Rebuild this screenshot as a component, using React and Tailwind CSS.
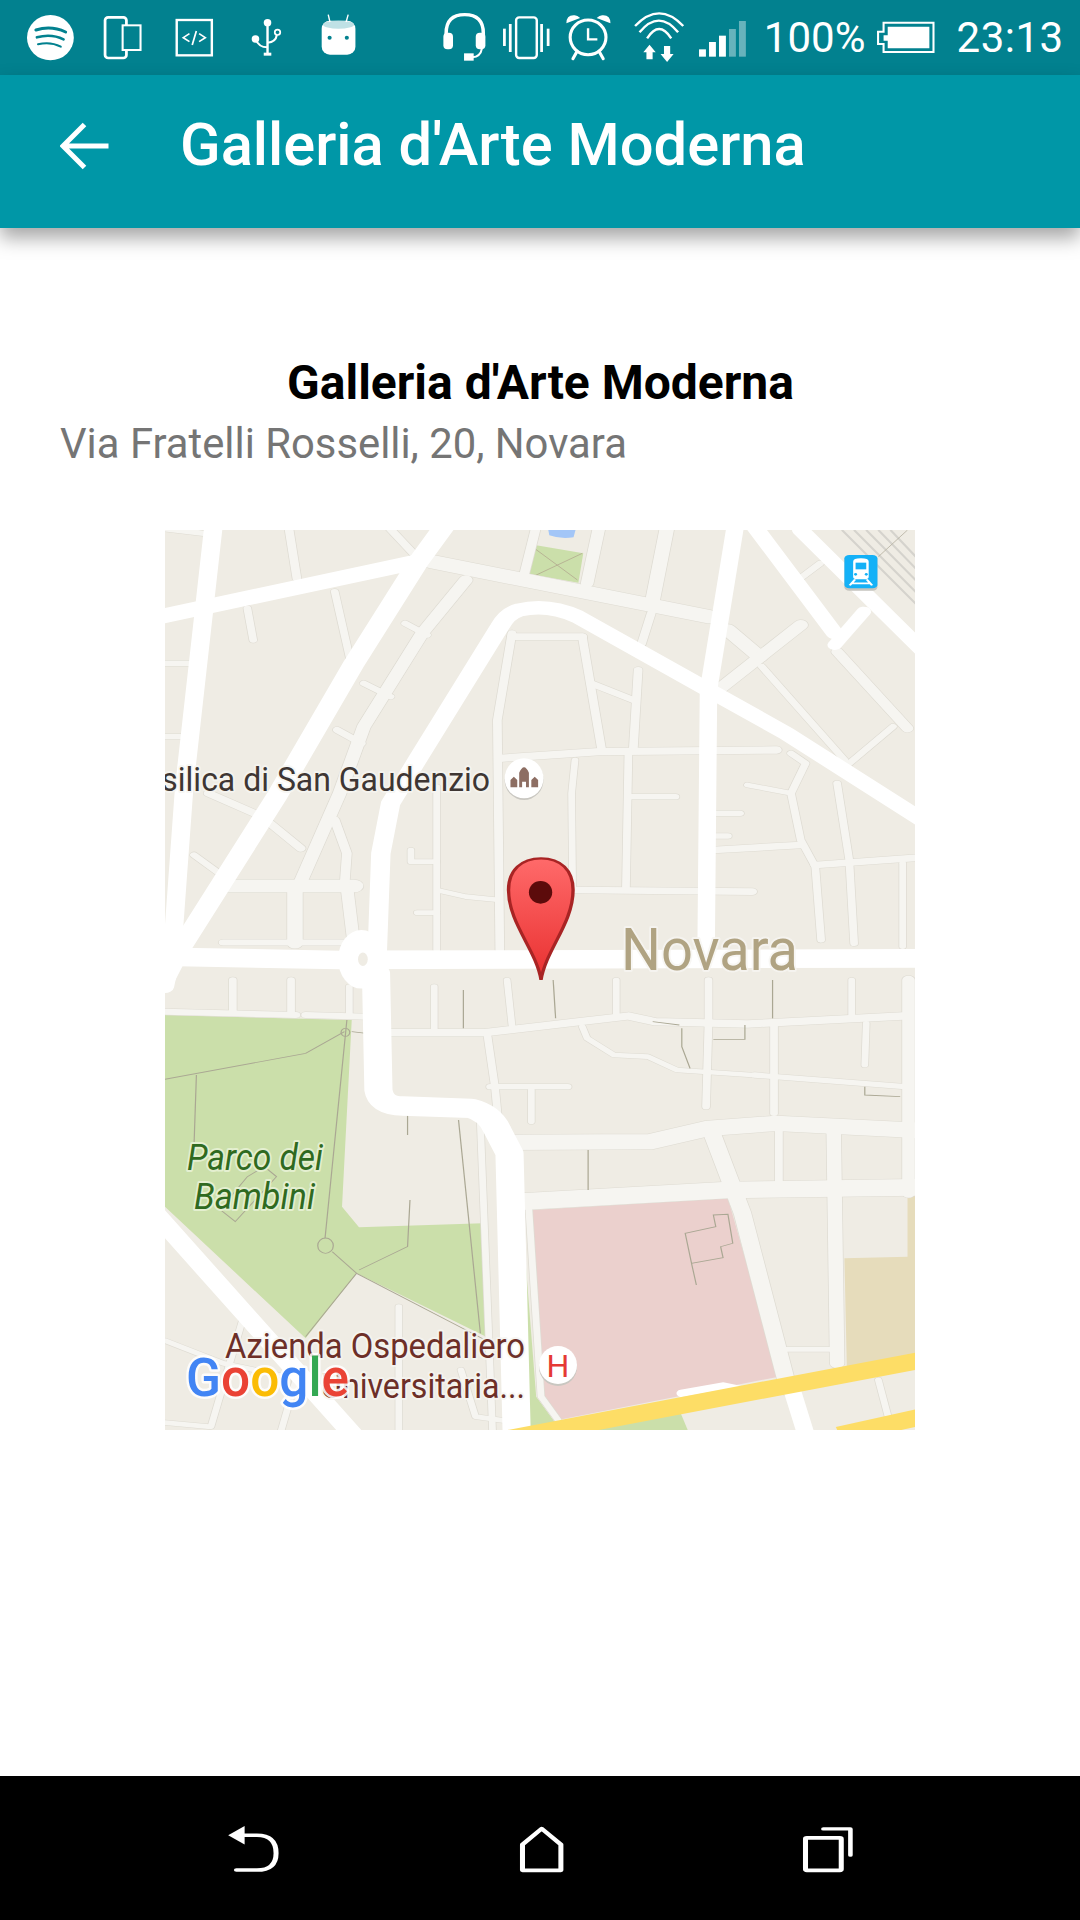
import React from 'react';

// road lists are in "zoom" coords of the map, the groups below scale them down
const topWhite = [
  ['M110 20 L90 280 L50 800 L25 1300 L10 1400', 38],
  ['M0 290 L530 125', 44],
  ['M585 20 L530 130 L400 430 L240 830 L40 1290 L5 1390', 44],
  ['M1570 900 L1290 640 L1130 510 L860 290 Q800 250 740 270 Q715 280 700 320 L530 720 L475 850 L455 1000 L445 1400', 40],
  ['M1185 20 L1130 510 L1125 1300', 36],
  ['M1225 20 L1390 340', 36],
  ['M1320 30 L1570 390', 36],
  ['M1450 275 L1390 375', 30],
  ['M0 1310 L370 1320 L1570 1315', 56],
];

const topLight = [
  ['M560 125 L1130 290', 40],
  ['M265 20 L282 175', 18],
  ['M470 20 L525 105', 18],
  ['M0 25 L90 40', 16],
  ['M775 20 L750 165', 20],
  ['M905 20 L880 190', 26],
  ['M1045 20 L1015 240', 30],
  ['M1012 280 L992 372', 18],
  ['M630 180 L540 340 L420 620 L370 820 L290 1085', 28],
  ['M180 265 L192 360', 16],
  ['M360 215 L395 440', 16],
  ['M420 490 L475 530', 16],
  ['M505 310 L550 345', 16],
  ['M365 630 L415 670', 18],
  ['M100 820 L210 890 L290 985', 20],
  ['M10 430 H70', 16],
  ['M10 650 H60', 16],
  ['M70 1005 L122 1060', 16],
  ['M725 350 H870', 20],
  ['M725 340 L695 600 L700 1290', 18],
  ['M870 350 L910 690', 18],
  ['M700 715 L905 695 L1270 690', 22],
  ['M888 490 L975 540', 18],
  ['M985 450 L975 690', 18],
  ['M965 700 L960 1100', 16],
  ['M855 720 L848 820 L850 1100', 14],
  ['M970 830 H1062', 16],
  ['M1140 880 H1195', 16],
  ['M1140 948 H1170', 16],
  ['M1210 795 L1300 820', 14],
  ['M855 1110 L1220 1115', 20],
  ['M1300 700 L1330 730 L1300 820 L1320 960 L1350 1040 L1362 1260', 16],
  ['M1140 990 L1320 975', 20],
  ['M1350 1035 L1570 1012', 20],
  ['M1395 790 L1420 1020 L1430 1270', 16],
  ['M1530 1030 V1280', 14],
  ['M570 800 V1290', 14],
  ['M575 1112 L630 1130 L700 1140', 14],
  ['M530 1178 H570', 14],
  ['M517 990 V1025 H570', 14],
  ['M130 1098 H400', 38],
  ['M278 1100 V1270', 32],
  ['M385 1100 L400 1280', 26],
  ['M130 1268 H380', 18],
  ['M360 900 L385 1000 L380 1100', 20],
  ['M1170 330 L1235 410', 34],
  ['M1320 315 L1150 510', 30],
  ['M1240 440 L1410 720', 16],
  ['M1395 395 L1540 625', 24],
  ['M1510 620 L1412 740', 16],
  ['M1360 130 L1305 190', 16],
];

const bottomLight = [
  ['M10 95 L280 105', 18],
  ['M300 105 L428 110', 18],
  ['M150 0 V100', 16],
  ['M270 0 V100', 16],
  ['M390 20 V100', 14],
  ['M465 158 H670 L965 108 L1020 125 L1210 132 L1530 108', 22],
  ['M565 20 V150', 14],
  ['M715 0 L725 135', 14],
  ['M940 0 V100', 14],
  ['M1130 0 V130 L1125 380', 16],
  ['M1425 0 V105', 14],
  ['M1265 135 V400', 16],
  ['M870 140 L880 175 L935 225 L1005 230 L1065 270 L1220 285', 14],
  ['M1225 285 L1535 320', 16],
  ['M1455 130 L1452 255', 14],
  ['M675 170 L690 320 L700 470', 16],
  ['M680 320 H840', 16],
  ['M765 330 V425', 14],
  ['M720 487 L1010 485 L1130 445 L1270 430 L1570 452', 46],
  ['M745 665 L1170 630 L1570 622', 50],
  ['M1140 470 L1200 700 L1295 1230', 36],
  ['M1275 450 V610', 16],
  ['M1388 460 L1395 1150', 30],
  ['M1542 0 V640', 26],
  ['M660 430 L685 1350', 14],
  ['M760 690 L785 1250 L820 1320', 14],
  ['M10 1082 L130 1150 L260 1190', 14],
  ['M170 1020 L105 1340', 14],
  ['M492 980 V1350', 14],
  ['M10 1328 L100 1340', 14],
  ['M280 1200 L250 1350', 14],
  ['M620 1170 L650 1310 L710 1322', 14],
  ['M1290 1108 H1385', 14],
  ['M1480 1200 L1500 1310', 14],
];

const thinLines = [
  'M882 510 V630',
  'M1105 915 L1095 850 L1160 833 L1155 800 L1180 790 L1170 703 L1140 705 L1145 740 L1082 760 L1095 850',
  'M10 298 L300 220 L380 155',
  'M75 285 L70 500',
  'M385 120 L340 775',
  'M355 815 L405 880 L300 1070',
  'M405 880 L670 1080',
  'M410 870 L510 800 L515 660',
  'M510 405 V465',
  'M615 420 L660 1060',
  'M395 155 L425 160',
  'M125 690 L155 725 L240 590 L215 560 L180 590 L140 660',
  'M1015 125 L1070 135',
  'M625 30 V145',
  'M810 0 L815 115',
  'M1262 0 V115',
  'M1140 178 H1205 L1205 135',
  'M1075 145 V200 L1092 265',
  'M1452 320 V345 L1525 350',
];

const Roads = ({ list, color = '#f6f5f1', edge = '#dedbd2' }) => (
  <>
    {edge && list.map(([d, w], i) => (
      <path key={'e' + i} d={d} fill="none" stroke={edge} strokeWidth={w + 3} strokeLinecap="round" strokeLinejoin="round" />
    ))}
    {list.map(([d, w], i) => (
      <path key={i} d={d} fill="none" stroke={color} strokeWidth={w} strokeLinecap="round" strokeLinejoin="round" />
    ))}
  </>
);

const MapDrawing = () => (
  <svg viewBox="0 0 750 900" width="750" height="900" className="block" style={{ fontFamily: 'Roboto, sans-serif' }}>
    <rect width="750" height="900" fill="#efece4" />

    {/* lower half, zoom coords of the bottom crop */}
    <g transform="translate(-5 450) scale(0.4854 0.3333)">
      <path d="M10 105 L395 120 L375 680 L410 742 L665 730 L672 1070 L405 880 L300 1075 L10 680 Z" fill="#cbdfaa" />
      <path d="M745 695 L775 1250 L820 1340 L760 1340 Z" fill="#cbdfaa" />
      <path d="M765 690 L1170 655 L1275 1190 L820 1320 L790 1250 Z" fill="#ebd0cd" />
      <path d="M1410 835 L1540 830 V648 H1570 V1120 L1415 1160 Z" fill="#e6dcbb" />
      <path d="M770 1330 L1070 1290 L1090 1360 H720 Z" fill="#cbdfaa" />
      <Roads list={bottomLight} />
      {thinLines.map((d, i) => (
        <path key={i} d={d} fill="none" stroke="#aaa793" strokeWidth="2.5" />
      ))}
      <ellipse cx="341" cy="797" rx="16" ry="23" fill="none" stroke="#aaa793" strokeWidth="2.5" />
      <ellipse cx="382" cy="157" rx="9" ry="12" fill="none" stroke="#aaa793" strokeWidth="2.5" />
      <Roads
        color="#ffffff"
        edge={null}
        list={[
          ['M445 -20 L450 330 Q455 378 500 378 L640 385 Q680 400 695 450 L720 520 L735 1370', 58],
          ['M-10 700 L395 1360', 44],
          ['M1300 1220 L1330 1360', 36],
          ['M1075 1240 L1160 1218 L1200 1230', 22],
        ]}
      />
      <path d="M720 1375 L1570 1140" stroke="#fddd66" strokeWidth="50" fill="none" />
      <path d="M1400 1365 L1570 1310" stroke="#fddd66" strokeWidth="50" fill="none" />
    </g>

    {/* upper half, zoom coords of the top crop */}
    <g transform="translate(-5 -10) scale(0.4854 0.3333)">
      <path d="M800 30 H856 L852 52 Q825 58 802 46 Z" fill="#a3c6f7" />
      <path d="M760 72 L872 100 L862 188 L750 160 Z" fill="#cbdfaa" />
      <path d="M762 75 L860 180 M870 100 L768 170" stroke="#b3ab90" strokeWidth="2" fill="none" />
      <Roads list={topLight} />
      <Roads list={topWhite} color="#ffffff" edge={null} />
      <ellipse cx="415" cy="1318" rx="48" ry="88" fill="#ffffff" />
      <ellipse cx="418" cy="1318" rx="10" ry="20" fill="#efece4" />
      {/* railway */}
      <path d="M1405 30 L1570 270 M1430 30 L1570 235 M1455 30 L1570 200 M1480 30 L1570 165 M1505 30 L1570 130" stroke="#d5d3cd" strokeWidth="5" fill="none" />
      <path d="M1480 110 L1540 30" stroke="#b5b0a0" strokeWidth="2" fill="none" />
      {/* station badge */}
      <rect x="1410" y="108" width="68" height="104" rx="10" fill="#c5c4be" />
      <rect x="1410" y="105" width="68" height="100" rx="10" fill="#14b1f7" />
      <path d="M1428 125 Q1428 115 1444 115 Q1460 115 1460 125 V170 Q1460 178 1450 178 H1438 Q1428 178 1428 170 Z" fill="#ffffff" />
      <rect x="1433" y="128" width="22" height="20" fill="#14b1f7" />
      <ellipse cx="1433" cy="163" rx="3" ry="4" fill="#14b1f7" />
      <ellipse cx="1455" cy="163" rx="3" ry="4" fill="#14b1f7" />
      <path d="M1432 178 L1421 196 M1456 178 L1467 196 M1426 190 H1462" stroke="#ffffff" strokeWidth="5" fill="none" />
      {/* church marker */}
      <ellipse cx="750" cy="780" rx="40" ry="60" fill="#c9c7c1" />
      <ellipse cx="750" cy="775" rx="40" ry="60" fill="#ffffff" />
      <path d="M722 802 V780 L729 770 L736 780 V802 Z M740 802 V758 Q750 725 760 758 V802 H754 V785 H746 V802 Z M765 802 V780 L772 770 L779 780 V802 Z" fill="#8d6e63" />
    </g>

    <g strokeLinejoin="round">
      <text transform="translate(325 261) scale(0.94 1)" textAnchor="end" fontSize="34" fill="#3e3633" stroke="#f6f5f1" strokeOpacity="0.8" strokeWidth="4" style={{ paintOrder: 'stroke' }}>Basilica di San Gaudenzio</text>
      <text x="456" y="440" fontSize="60" textLength="177" lengthAdjust="spacingAndGlyphs" fill="#b0a382" stroke="#f6f5f1" strokeOpacity="0.8" strokeWidth="4" style={{ paintOrder: 'stroke' }}>Novara</text>
      <text x="22" y="640" fontSize="37" fontStyle="italic" textLength="136" lengthAdjust="spacingAndGlyphs" fill="#2f6a1f" stroke="#e4efd0" strokeWidth="4" style={{ paintOrder: 'stroke' }}>Parco dei</text>
      <text x="29" y="679" fontSize="37" fontStyle="italic" textLength="121" lengthAdjust="spacingAndGlyphs" fill="#2f6a1f" stroke="#e4efd0" strokeWidth="4" style={{ paintOrder: 'stroke' }}>Bambini</text>
      <text x="60" y="828" fontSize="35" textLength="300" lengthAdjust="spacingAndGlyphs" fill="#6d2f28" stroke="#f6f5f1" strokeOpacity="0.8" strokeWidth="4" style={{ paintOrder: 'stroke' }}>Azienda Ospedaliero</text>
      <text transform="translate(360 868) scale(0.92 1)" fontSize="35" textAnchor="end" fill="#6d2f28" stroke="#f6f5f1" strokeOpacity="0.8" strokeWidth="4" style={{ paintOrder: 'stroke' }}>Universitaria...</text>
    </g>

    <circle cx="393" cy="837" r="19" fill="#c9c7c1" />
    <circle cx="393" cy="835" r="19" fill="#ffffff" />
    <text x="393" y="847" textAnchor="middle" fontSize="32" fill="#e53935">H</text>

    <text x="21" y="866" fontSize="53" fontWeight="500" textLength="163" lengthAdjust="spacingAndGlyphs" stroke="#ffffff" strokeOpacity="0.85" strokeWidth="5" strokeLinejoin="round" style={{ paintOrder: 'stroke' }}>
      <tspan fill="#4285f4">G</tspan>
      <tspan fill="#ea4335">o</tspan>
      <tspan fill="#fbbc05">o</tspan>
      <tspan fill="#4285f4">g</tspan>
      <tspan fill="#34a853">l</tspan>
      <tspan fill="#ea4335">e</tspan>
    </text>

    {/* pin */}
    <defs>
      <linearGradient id="pinFill" x1="0" y1="0" x2="0" y2="1">
        <stop offset="0" stopColor="#ff6a6a" />
        <stop offset="1" stopColor="#e93030" />
      </linearGradient>
    </defs>
    <g transform="translate(-5 -10) scale(0.4854 0.3333)">
      <path
        d="M785 1380 C775 1290 718 1210 718 1110 C718 1050 745 1015 785 1015 C825 1015 851 1050 851 1110 C851 1210 795 1290 785 1380 Z"
        fill="url(#pinFill)"
        stroke="#a82424"
        strokeWidth="7"
      />
      <ellipse cx="784" cy="1117" rx="24" ry="34" fill="#5c0b0b" />
    </g>
  </svg>
);

// status bar icons share the y range of the bar, x is in crop coords
const StatusIcon = ({ x, w, children, className = '' }) => (
  <svg
    viewBox={`${x} 0 ${w} 225`}
    width={w / 2.904}
    height="75"
    preserveAspectRatio="none"
    className={'block shrink-0 ' + className}
  >
    {children}
  </svg>
);

const barTeal = '#02818f';

const StatusBar = () => (
  <div className="flex h-[75px] shrink-0 items-center bg-[#02818f] pl-[27px] text-white">
    <StatusIcon x={80} w={140}>
      <circle cx="148" cy="113" r="68" fill="#fff" />
      <path d="M106 90 Q150 76 192 96" stroke={barTeal} strokeWidth="9" strokeLinecap="round" fill="none" />
      <path d="M109 112 Q150 100 186 118" stroke={barTeal} strokeWidth="8" strokeLinecap="round" fill="none" />
      <path d="M112 133 Q148 124 178 140" stroke={barTeal} strokeWidth="6" strokeLinecap="round" fill="none" />
    </StatusIcon>
    <StatusIcon x={300} w={114} className="ml-[28px]">
      <rect x="306" y="52" width="62" height="122" rx="9" fill="none" stroke="#fff" strokeWidth="8" />
      <rect x="357" y="76" width="52" height="74" fill={barTeal} stroke="#fff" strokeWidth="6" />
    </StatusIcon>
    <StatusIcon x={510} w={112} className="ml-[33px]">
      <rect x="515" y="60" width="102" height="106" fill="none" stroke="#fff" strokeWidth="7" />
      <path d="M552 101 L534 113 L552 125 M580 101 L598 113 L580 125 M572 93 L560 135" fill="none" stroke="#fff" strokeWidth="5" />
    </StatusIcon>
    <StatusIcon x={728} w={90} className="ml-[37px]">
      <path d="M776 65 V165" stroke="#fff" strokeWidth="7" />
      <circle cx="776" cy="68" r="11" fill="#fff" />
      <rect x="765" y="158" width="22" height="9" fill="#fff" />
      <circle cx="741" cy="117" r="11" fill="#fff" />
      <path d="M741 117 Q750 142 776 142" stroke="#fff" strokeWidth="6" fill="none" />
      <circle cx="805" cy="97" r="8" stroke="#fff" strokeWidth="5" fill="none" />
      <path d="M803 105 Q800 126 776 128" stroke="#fff" strokeWidth="6" fill="none" />
    </StatusIcon>
    <StatusIcon x={934} w={102} className="ml-[39px]">
      <rect x="936" y="62" width="98" height="102" rx="24" fill="#fff" />
      <ellipse cx="985" cy="74" rx="45" ry="12" fill="#bfe1e5" />
      <circle cx="959" cy="113" r="6" fill={barTeal} />
      <circle cx="1009" cy="113" r="6" fill={barTeal} />
      <path d="M955 44 L960 66 M1013 44 L1007 66" stroke="#fff" strokeWidth="4" />
    </StatusIcon>

    <StatusIcon x={1280} w={130} className="ml-[86px]">
      <path d="M1292 115 V100 Q1292 44 1346 44 Q1400 44 1400 100 V115" fill="none" stroke="#fff" strokeWidth="10" />
      <rect x="1284" y="98" width="28" height="50" rx="12" fill="#fff" />
      <rect x="1378" y="98" width="28" height="50" rx="12" fill="#fff" />
      <path d="M1396 145 Q1392 170 1368 172" fill="none" stroke="#fff" strokeWidth="6" />
      <rect x="1344" y="160" width="28" height="22" fill="#fff" />
    </StatusIcon>
    <StatusIcon x={1458} w={142} className="ml-[15px]">
      <rect x="1461" y="86" width="8" height="52" fill="#fff" />
      <rect x="1478" y="72" width="8" height="84" fill="#fff" />
      <rect x="1499" y="52" width="60" height="122" rx="9" fill="none" stroke="#fff" strokeWidth="7" />
      <rect x="1569" y="72" width="8" height="84" fill="#fff" />
      <rect x="1588" y="86" width="8" height="52" fill="#fff" />
    </StatusIcon>
    <StatusIcon x={1644} w={136} className="ml-[14px]">
      <circle cx="1711" cy="112" r="52" fill="none" stroke="#fff" strokeWidth="9" />
      <path d="M1711 85 V118 H1738" fill="none" stroke="#fff" strokeWidth="7" />
      <path d="M1648 70 Q1648 44 1672 46 Q1680 46 1688 54 Z M1776 70 Q1776 44 1752 46 Q1744 46 1736 54 Z" fill="#fff" />
      <path d="M1678 156 L1667 176 M1744 156 L1755 176" stroke="#fff" strokeWidth="9" strokeLinecap="round" />
    </StatusIcon>
    <StatusIcon x={1842} w={152} className="ml-[21px]">
      <path d="M1848 78 Q1918 2 1988 78" fill="none" stroke="#fff" strokeWidth="7" />
      <path d="M1861 97 Q1917 27 1973 97" fill="none" stroke="#fff" strokeWidth="7" />
      <path d="M1883 115 Q1918 59 1953 115" fill="none" stroke="#fff" strokeWidth="7" />
      <path d="M1890 134 L1872 157 H1881 V178 H1899 V157 H1908 Z" fill="#fff" />
      <path d="M1941 186 L1922 162 H1932 V138 H1950 V162 H1960 Z" fill="#fff" />
    </StatusIcon>
    <StatusIcon x={2030} w={142} className="ml-[13px]">
      <rect x="2033" y="148" width="20" height="22" fill="#fff" />
      <rect x="2062" y="126" width="20" height="44" fill="#fff" />
      <rect x="2091" y="107" width="20" height="63" fill="#fff" />
      <rect x="2120" y="87" width="20" height="83" fill="#fff" fillOpacity="0.4" />
      <rect x="2149" y="63" width="20" height="107" fill="#fff" fillOpacity="0.4" />
    </StatusIcon>
    <span className="ml-[17px] text-[42px] leading-none font-normal">100%</span>
    <StatusIcon x={2550} w={172} className="ml-[11px]">
      <path d="M2572 68 H2717 V156 H2572 V132 H2556 V95 H2572 Z" fill="none" stroke="#fff" strokeWidth="6" />
      <path d="M2584 80 H2705 V145 H2584 V122 H2572 V106 H2584 Z" fill="#fff" />
    </StatusIcon>
    <span className="ml-[21px] text-[42px] leading-none font-normal tracking-[0.5px]">23:13</span>
  </div>
);

const AppBar = () => (
  <div className="relative z-10 flex h-[153px] shrink-0 items-center bg-[#0097a7] pb-[12px] pl-[60px] shadow-[0_10px_18px_rgba(0,0,0,0.35)]">
    <svg viewBox="0 0 48 48" width="49" height="48" className="block shrink-0">
      <path d="M48 24 H3 M24 2.5 L2.5 24 L24 45.5" fill="none" stroke="#fff" strokeWidth="5" />
    </svg>
    <h1 className="ml-[71px] text-[59.7px] leading-none font-medium text-white">Galleria d'Arte Moderna</h1>
  </div>
);

const NavBar = () => (
  <div className="flex h-[144px] shrink-0 items-center justify-center gap-[235px] bg-black">
    <svg viewBox="95 150 125 160" width="57" height="53" preserveAspectRatio="none" className="block">
      <path d="M102 190 L138 162 V218 Z" fill="#fff" />
      <path d="M130 190 H165 Q207 190 207 244 Q207 295 165 295 H120" fill="none" stroke="#fff" strokeWidth="11" strokeLinecap="round" />
    </svg>
    <svg viewBox="730 150 105 160" width="48" height="53" preserveAspectRatio="none" className="block">
      <path d="M742 218 L784 170 L826 218 V296 H742 Z" fill="none" stroke="#fff" strokeWidth="11" strokeLinejoin="round" />
    </svg>
    <svg viewBox="1350 150 120 160" width="55" height="53" preserveAspectRatio="none" className="block">
      <rect x="1362" y="198" width="78" height="98" rx="3" fill="none" stroke="#fff" strokeWidth="11" />
      <path d="M1401 171 H1460 V250" fill="none" stroke="#fff" strokeWidth="10" strokeLinecap="round" strokeLinejoin="round" />
    </svg>
  </div>
);

export default function App() {
  return (
    <div className="flex h-[1920px] w-[1080px] flex-col overflow-hidden bg-white font-['Roboto',sans-serif]">
      <StatusBar />
      <AppBar />
      <main className="flex-1 pt-[124px]">
        <h2 className="pl-[1px] text-center text-[48px] leading-[61px] font-bold text-black">Galleria d'Arte Moderna</h2>
        <p className="pl-[60px] pt-[1px] text-[41.8px] leading-[60px] text-[#757575]">Via Fratelli Rosselli, 20, Novara</p>
        <div className="mx-auto mt-[56px] h-[900px] w-[750px] overflow-hidden">
          <MapDrawing />
        </div>
      </main>
      <NavBar />
    </div>
  );
}
